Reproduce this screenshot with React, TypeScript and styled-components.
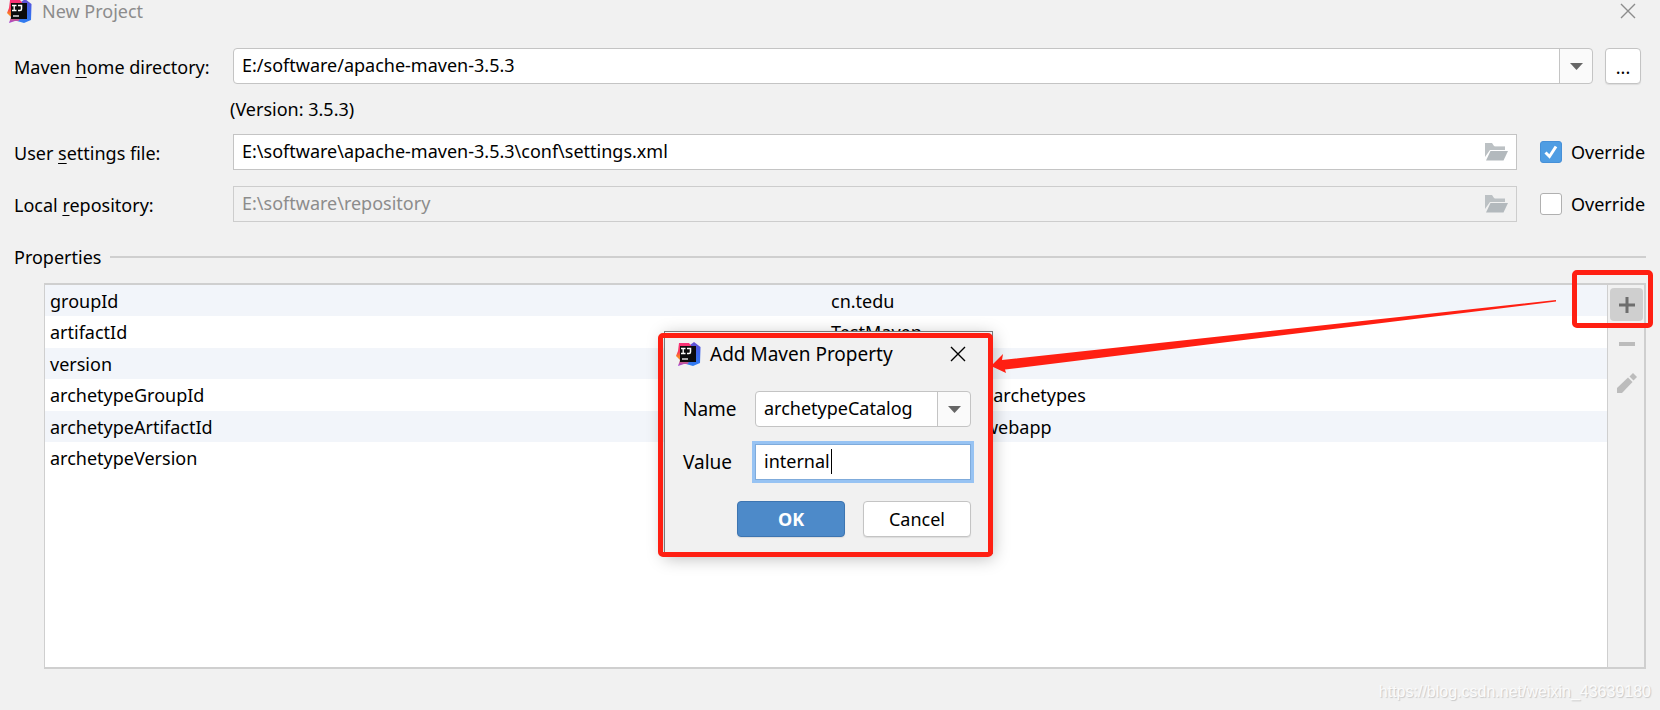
import React from "react";
import styled, { createGlobalStyle, css } from "styled-components";

const RED = "#ff1f12";
const LINE = "#c4c4c4";
const SANS = '"Noto Sans", "Open Sans", sans-serif';

const GlobalStyle = createGlobalStyle`
  *, *::before, *::after { box-sizing: border-box; }
  body {
    margin: 0;
    background: #f1f1f1;
    color: #000;
    font: 18px/24px ${SANS};
  }
  button, input, select { font: inherit; color: inherit; margin: 0; }
`;

const Window = styled.main`
  position: relative;
  display: flex;
  flex-direction: column;
  min-height: 100vh;
  padding: 0 14px 8px;
  overflow: hidden;
`;

const TitleBar = styled.header`
  display: flex;
  align-items: center;
  height: 22px;
  gap: 10px;
  padding-right: 10px;
  color: #8c8c8c;
  margin-left: -7px;
`;

const Title = styled.h1`
  flex: 1;
  margin: 0;
  font-size: 18px;
  font-weight: 400;
  line-height: 22px;
`;

const IconButton = styled.button`
  display: flex;
  align-items: center;
  justify-content: center;
  padding: 0;
  border: 0;
  background: none;
`;

const Form = styled.form`
  display: grid;
  grid-template-columns: 219px minmax(0, 1fr);
  row-gap: 16px;
  margin-top: 26px;
`;

const Label = styled.label`
  align-self: center;
  padding-top: 1px;
  white-space: nowrap;

  u { text-underline-offset: 3px; }
`;

const FieldRow = styled.div`
  display: flex;
  align-items: center;
  min-height: 36px;
`;

const Version = styled.p`
  grid-column: 2;
  margin: 0 0 0 -3px;
  line-height: 18px;
`;

const Combo = styled.div`
  position: relative;
  flex: 1;
  display: flex;
  min-width: 0;
`;

const Select = styled.select`
  appearance: none;
  width: 100%;
  height: 36px;
  padding: 0 40px 2px 8px;
  border: 1px solid ${LINE};
  border-radius: 4px;
  outline: 0;
  background: linear-gradient(to left, #fafafa 32px, ${LINE} 32px, ${LINE} 33px, #fff 33px);
`;

const ComboArrow = styled.svg`
  position: absolute;
  right: 10px;
  top: 15px;
  pointer-events: none;
`;

const BrowseButton = styled.button`
  width: 36px;
  height: 36px;
  margin: 0 5px 0 12px;
  padding: 2px 0 0;
  border: 1px solid ${LINE};
  border-radius: 4px;
  background: #fff;
  box-shadow: 0 1px 1px #dcdcdc;
`;

const PathField = styled.div<{ $disabled?: boolean }>`
  flex: 1;
  display: flex;
  align-items: center;
  height: 36px;
  padding-right: 8px;
  border: 1px solid ${(p) => (p.$disabled ? "#cdcdcd" : LINE)};
  background: ${(p) => (p.$disabled ? "#f1f1f1" : "#fff")};
`;

const PathInput = styled.input`
  flex: 1;
  min-width: 0;
  height: 32px;
  padding: 0 8px 2px;
  border: 0;
  outline: 0;
  background: transparent;

  &:disabled { color: #8c8c8c; }
`;

const Override = styled.label`
  display: flex;
  align-items: center;
  gap: 9px;
  width: 106px;
  margin-left: 23px;
`;

const Checkbox = styled.input`
  appearance: none;
  flex: none;
  width: 22px;
  height: 22px;
  border: 1px solid #b0b0b0;
  border-radius: 3px;
  background: #fff;

  &:checked {
    border-color: #4690d8;
    background: #4f9de3;
  }
`;

const CheckSlot = styled.span`
  position: relative;
  display: flex;

  svg {
    position: absolute;
    inset: 0;
    pointer-events: none;
  }
`;

const SectionHead = styled.div`
  display: flex;
  align-items: center;
  gap: 9px;
  margin-top: 23px;

  &::after {
    content: "";
    flex: 1;
    height: 2px;
    background: #cfcfcf;
  }
`;

const SectionTitle = styled.h2`
  margin: 0;
  font-size: 18px;
  font-weight: 400;
  line-height: 24px;
`;

const TablePanel = styled.section`
  display: flex;
  flex: 1;
  margin: 14px 0 33px 30px;
  border: 2px solid #cfcfcf;
  border-left-width: 1px;
  background: #fff;
`;

const TableArea = styled.div`
  flex: 1;
  min-width: 0;
`;

const Table = styled.table`
  width: 100%;
  table-layout: fixed;
  border-collapse: collapse;

  td {
    height: 32px;
    padding: 0 5px;
    line-height: 24px;
  }

  tr:nth-child(odd) td {
    height: 31px;
    background: #f2f5fa;
  }
`;

const Toolbar = styled.div`
  position: relative;
  display: flex;
  flex-direction: column;
  align-items: flex-end;
  gap: 6px;
  width: 37px;
  padding: 3px 1px 0 0;
  border-left: 1px solid #cfcfcf;
  background: #f1f1f1;
`;

const ToolButton = styled(IconButton)<{ $active?: boolean }>`
  width: 33px;
  height: 33px;
  border-radius: 4px;
  background: ${(p) => (p.$active ? "#cfcfcf" : "none")};
`;

const marker = css`
  position: absolute;
  border: 5px solid ${RED};
  border-radius: 5px;
  pointer-events: none;
`;

const PlusMarker = styled.div`
  ${marker}
  top: -15px;
  right: -9px;
  width: 81px;
  height: 58px;
`;

const Dialog = styled.section`
  position: absolute;
  left: 40%;
  top: 331px;
  width: 329px;
  height: 223px;
  padding: 10px 21px 0 11px;
  border: 1px solid #777;
  background: #f1f1f1;
  box-shadow: 0 4px 16px rgba(0, 0, 0, 0.28);
`;

const DialogMarker = styled.div`
  ${marker}
  inset: 1px -1px -4px -7px;
`;

const DialogTitleBar = styled.header`
  display: flex;
  align-items: center;
  gap: 9px;
  height: 24px;
  padding-right: 5px;
`;

const DialogTitle = styled(Title)`
  font-size: 19px;
`;

const DialogForm = styled.form`
  display: grid;
  grid-template-columns: 72px 1fr;
  row-gap: 17px;
  align-items: center;
  margin: 25px 0 0 7px;

  label { font-size: 19px; }
`;

const ValueInput = styled.input`
  width: 100%;
  height: 36px;
  padding: 0 8px 2px;
  border: 1px solid #7fabdb;
  outline: 3px solid #97c3f3;
  background: linear-gradient(#000, #000) 75px 4px / 1px 25px no-repeat #fff;
`;

const DialogActions = styled.div`
  grid-column: 1 / -1;
  display: flex;
  justify-content: flex-end;
  gap: 18px;
  margin-top: 4px;
`;

const DialogButton = styled.button<{ $primary?: boolean }>`
  width: 108px;
  height: 36px;
  padding: 0;
  border: 1px solid ${(p) => (p.$primary ? "#3d75b1" : LINE)};
  border-radius: 4px;
  background: ${(p) => (p.$primary ? "#4d8ac9" : "#fff")};
  color: ${(p) => (p.$primary ? "#fff" : "#000")};
  font-weight: ${(p) => (p.$primary ? 700 : 400)};
  box-shadow: 0 1px 1px #dcdcdc;
`;

const Arrow = styled.svg`
  position: absolute;
  left: calc(40% + 327px);
  top: 299px;
  width: calc(60% - 430px);
  height: 78px;
  pointer-events: none;
`;

const Watermark = styled.footer`
  position: absolute;
  right: 9px;
  bottom: 6px;
  color: #fbfbfb;
  font: 16px/24px "Liberation Sans", Arial, sans-serif;
  text-shadow: 1px 1px 1px #c8c8c8;
`;

function Logo({ id }: { id: string }) {
  return (
    <svg width="25" height="25" viewBox="0 0 25 25" aria-hidden="true">
      <defs>
        <linearGradient id={`${id}-blue`} x1="0" y1="0" x2="0" y2="1">
          <stop offset="0" stopColor="#6a4fd0" />
          <stop offset=".4" stopColor="#3f62ea" />
          <stop offset="1" stopColor="#2f7df0" />
        </linearGradient>
        <linearGradient id={`${id}-warm`} x1="0" y1="0" x2="0" y2="1">
          <stop offset="0" stopColor="#f9307a" />
          <stop offset=".4" stopColor="#f93a58" />
          <stop offset=".62" stopColor="#fb8a1d" />
          <stop offset="1" stopColor="#a03be0" />
        </linearGradient>
      </defs>
      <path d="M18 0 24.500 5 24 21 17 24 10 22 14 3Z" fill={`url(#${id}-blue)`} />
      <path d="M3 1h10l4 5-5 16H8l-6 2 2-6-4-4 2-5Z" fill={`url(#${id}-warm)`} />
      <path d="M4 4h16v16H4z" fill="#0b0b0d" />
      <g fill="none" stroke="#fff">
        <path d="M5 6.500h4.500M7.200 6.500v5M5 11.500h4.500" strokeWidth="1.300" />
        <path d="M11 6.500h3.500v3.500q0 1.500-1.500 1.500h-2" strokeWidth="1.500" />
        <path d="M6 17h6" strokeWidth="1.300" />
      </g>
    </svg>
  );
}

function CloseIcon() {
  return (
    <svg width="16" height="16" viewBox="0 0 16 16" aria-hidden="true">
      <path d="M1 1 15 15M15 1 1 15" stroke="currentColor" strokeWidth="1.400" />
    </svg>
  );
}

function DropArrow() {
  return (
    <ComboArrow width="13" height="8" viewBox="0 0 13 8" aria-hidden="true">
      <path d="M0 0h13L6.500 7Z" fill="#666" />
    </ComboArrow>
  );
}

function FolderIcon() {
  return (
    <svg width="23" height="18" viewBox="0 0 23 18" aria-hidden="true">
      <path d="M0 0h7l2 3h11v4H5L0 14Z" fill="#bcc1c4" />
      <path d="M9.500 3.500H20" stroke="#d6d9db" />
      <path d="M5.500 8H23l-4.500 9.500H1Z" fill="#b3b9bd" />
    </svg>
  );
}

function OverrideBox({ checked, name }: { checked?: boolean; name: string }) {
  return (
    <Override>
      <CheckSlot>
        <Checkbox type="checkbox" name={name} defaultChecked={checked} />
        {checked && (
          <svg width="22" height="22" viewBox="0 0 22 22" aria-hidden="true">
            <path d="M5.500 11.500 9.500 15.500 16 5.500" fill="none" stroke="#fff" strokeWidth="3" />
          </svg>
        )}
      </CheckSlot>
      Override
    </Override>
  );
}

const properties = [
  ["groupId", "cn.tedu"],
  ["artifactId", "TestMaven"],
  ["version", "1.0-SNAPSHOT"],
  ["archetypeGroupId", "org.apache.maven.archetypes"],
  ["archetypeArtifactId", "maven-archetype-webapp"],
  ["archetypeVersion", "RELEASE"],
];

function AddPropertyDialog() {
  return (
    <Dialog role="dialog" aria-labelledby="dialog-title">
      <DialogTitleBar>
        <Logo id="dialog" />
        <DialogTitle as="h2" id="dialog-title">Add Maven Property</DialogTitle>
        <IconButton type="button" aria-label="Close dialog"><CloseIcon /></IconButton>
      </DialogTitleBar>
      <DialogForm>
        <label htmlFor="prop-name">Name</label>
        <Combo>
          <Select id="prop-name"><option>archetypeCatalog</option></Select>
          <DropArrow />
        </Combo>
        <label htmlFor="prop-value">Value</label>
        <ValueInput id="prop-value" defaultValue="internal" />
        <DialogActions>
          <DialogButton type="button" $primary>OK</DialogButton>
          <DialogButton type="button">Cancel</DialogButton>
        </DialogActions>
      </DialogForm>
      <DialogMarker />
    </Dialog>
  );
}

export default function App() {
  return (
    <Window>
      <GlobalStyle />
      <TitleBar>
        <Logo id="window" />
        <Title>New Project</Title>
        <IconButton type="button" aria-label="Close"><CloseIcon /></IconButton>
      </TitleBar>

      <Form>
        <Label htmlFor="maven-home">Maven <u>h</u>ome directory:</Label>
        <FieldRow>
          <Combo>
            <Select id="maven-home"><option>E:/software/apache-maven-3.5.3</option></Select>
            <DropArrow />
          </Combo>
          <BrowseButton type="button">...</BrowseButton>
        </FieldRow>
        <Version>(Version: 3.5.3)</Version>
        <Label htmlFor="settings-file">User <u>s</u>ettings file:</Label>
        <FieldRow>
          <PathField>
            <PathInput id="settings-file" defaultValue="E:\software\apache-maven-3.5.3\conf\settings.xml" />
            <FolderIcon />
          </PathField>
          <OverrideBox name="override-settings" checked />
        </FieldRow>
        <Label htmlFor="local-repo">Local <u>r</u>epository:</Label>
        <FieldRow>
          <PathField $disabled>
            <PathInput id="local-repo" defaultValue="E:\software\repository" disabled />
            <FolderIcon />
          </PathField>
          <OverrideBox name="override-repo" />
        </FieldRow>
      </Form>

      <SectionHead><SectionTitle>Properties</SectionTitle></SectionHead>
      <TablePanel>
        <TableArea>
          <Table>
            <tbody>
              {properties.map(([key, value]) => (
                <tr key={key}>
                  <td>{key}</td>
                  <td>{value}</td>
                </tr>
              ))}
            </tbody>
          </Table>
        </TableArea>
        <Toolbar>
          <ToolButton type="button" $active aria-label="Add">
            <svg width="16" height="16" viewBox="0 0 16 16"><path d="M8 0v16M0 8h16" stroke="#6e6e6e" strokeWidth="3" /></svg>
          </ToolButton>
          <ToolButton type="button" aria-label="Remove">
            <svg width="16" height="16" viewBox="0 0 16 16"><path d="M0 8h16" stroke="#bcbcbc" strokeWidth="4" /></svg>
          </ToolButton>
          <ToolButton type="button" aria-label="Edit">
            <svg width="20" height="20" viewBox="0 0 20 20" fill="#bcbcbc">
              <path d="M0 15 11 4.500 15.500 9 5 20H0Z" />
              <path d="M12.500 3.500 16 0 20 4 16.500 7.500Z" />
            </svg>
          </ToolButton>
          <PlusMarker />
        </Toolbar>
      </TablePanel>

      <AddPropertyDialog />
      <Arrow viewBox="0 0 566 78" preserveAspectRatio="none" aria-hidden="true">
        <path d="M0 67 12 55 11 61 565 1V2.500L14 70.500 15 74Z" fill={RED} />
      </Arrow>
      <Watermark>https://blog.csdn.net/weixin_43639180</Watermark>
    </Window>
  );
}
